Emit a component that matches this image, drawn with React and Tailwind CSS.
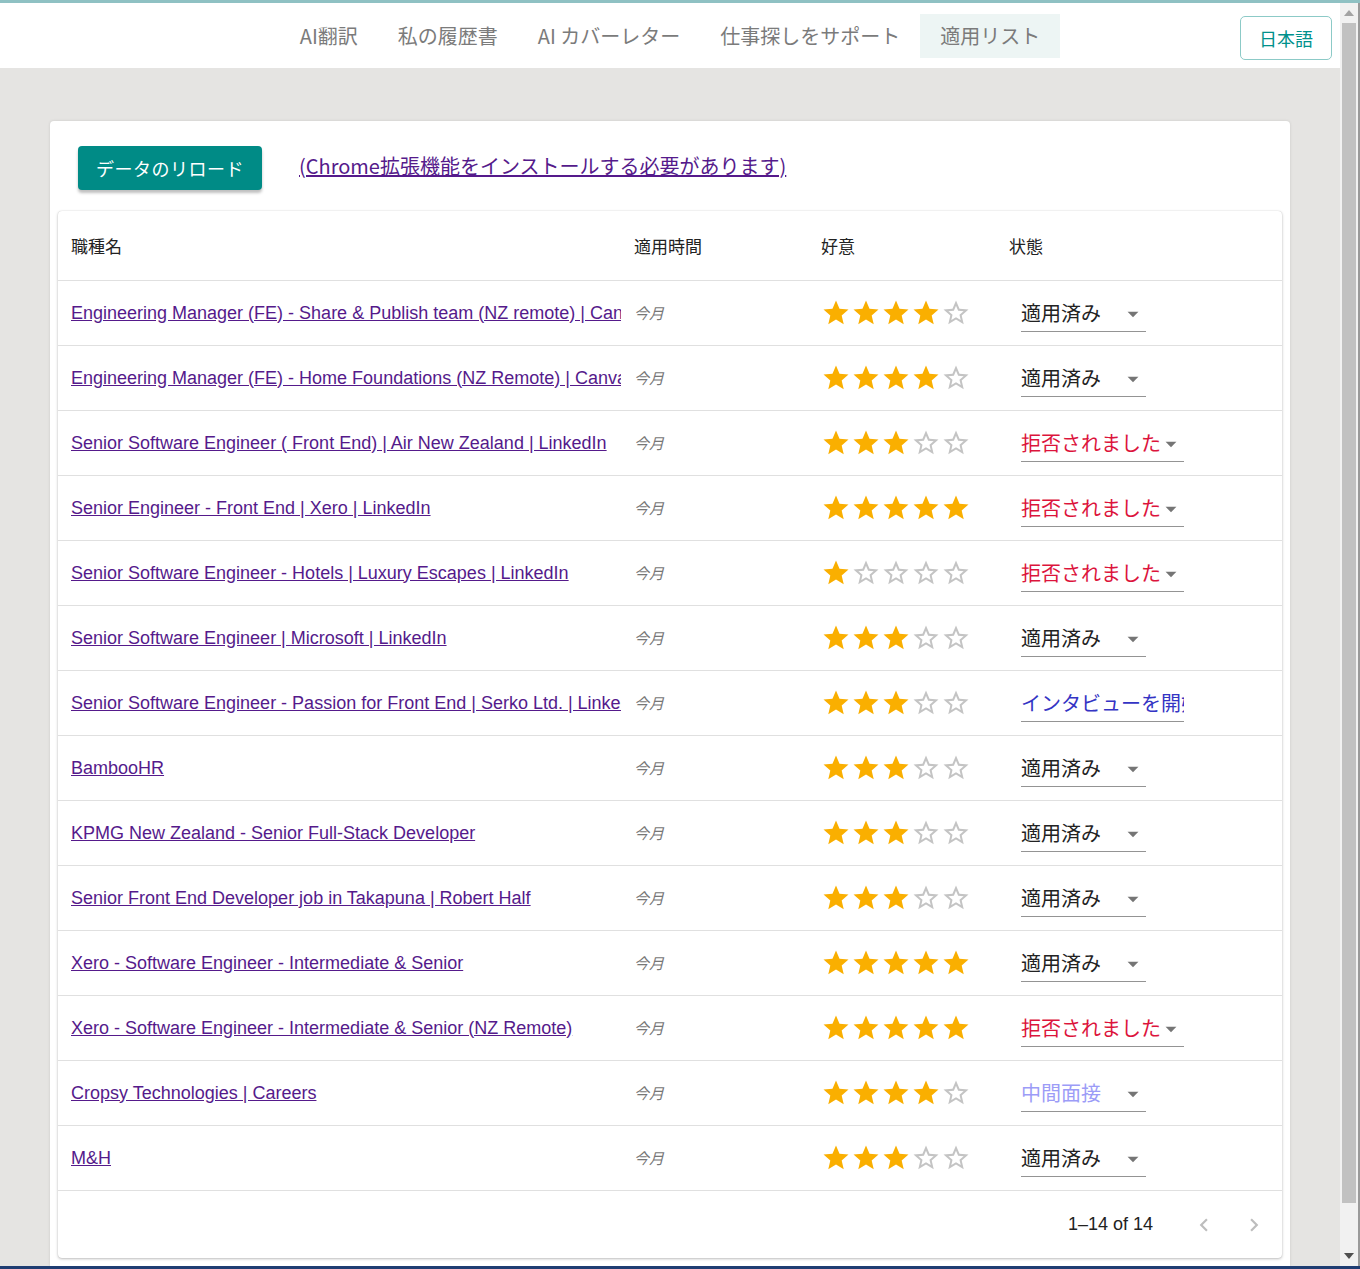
import React from 'react';

const jp = '"Noto Sans CJK JP", sans-serif';
const latin = '"Liberation Sans", "Noto Sans CJK JP", sans-serif';

const jobs = [
  { title: 'Engineering Manager (FE) - Share & Publish team (NZ remote) | Canva', rating: 4, status: 'applied' },
  { title: 'Engineering Manager (FE) - Home Foundations (NZ Remote) | Canva', rating: 4, status: 'applied' },
  { title: 'Senior Software Engineer ( Front End) | Air New Zealand | LinkedIn', rating: 3, status: 'rejected' },
  { title: 'Senior Engineer - Front End | Xero | LinkedIn', rating: 5, status: 'rejected' },
  { title: 'Senior Software Engineer - Hotels | Luxury Escapes | LinkedIn', rating: 1, status: 'rejected' },
  { title: 'Senior Software Engineer | Microsoft | LinkedIn', rating: 3, status: 'applied' },
  { title: 'Senior Software Engineer - Passion for Front End | Serko Ltd. | LinkedIn', rating: 3, status: 'interview' },
  { title: 'BambooHR', rating: 3, status: 'applied' },
  { title: 'KPMG New Zealand - Senior Full-Stack Developer', rating: 3, status: 'applied' },
  { title: 'Senior Front End Developer job in Takapuna | Robert Half', rating: 3, status: 'applied' },
  { title: 'Xero - Software Engineer - Intermediate & Senior', rating: 5, status: 'applied' },
  { title: 'Xero - Software Engineer - Intermediate & Senior (NZ Remote)', rating: 5, status: 'rejected' },
  { title: 'Cropsy Technologies | Careers', rating: 4, status: 'midterm' },
  { title: 'M&H', rating: 3, status: 'applied' },
];

const statusStyle = {
  applied: { label: '適用済み', cls: 'text-[#222222]' },
  rejected: { label: '拒否されました', cls: 'text-[#dc143c]' },
  interview: { label: 'インタビューを開始', cls: 'text-[#3434c4]' },
  midterm: { label: '中間面接', cls: 'text-[#9c9cf7]' },
};

function Star({ filled }) {
  return (
    <svg width="30" height="30" viewBox="0 0 24 24" className={filled ? 'fill-[#faaf00]' : 'fill-[#c4c4c4]'}>
      {filled ? (
        <path d="M12 17.27L18.18 21l-1.64-7.03L22 9.24l-7.19-.61L12 2 9.19 8.63 2 9.24l5.46 4.73L5.82 21z" />
      ) : (
        <path d="M22 9.24l-7.19-.62L12 2 9.19 8.63 2 9.24l5.46 4.73L5.82 21 12 17.27 18.18 21l-1.63-7.03L22 9.24zM12 15.4l-3.76 2.27 1-4.28-3.32-2.88 4.38-.38L12 6.1l1.71 4.04 4.38.38-3.32 2.88 1 4.28L12 15.4z" />
      )}
    </svg>
  );
}

function StatusSelect({ status }) {
  const s = statusStyle[status];
  const long = status === 'interview';
  return (
    <div
      className={`relative ml-3 inline-flex h-[37px] min-w-[125px] max-w-[163px] items-center overflow-hidden border-b border-[#949494] ${long ? '' : 'pr-6'}`}
    >
      <span className={`overflow-hidden whitespace-nowrap text-[20px] ${s.cls}`} style={{ fontFamily: jp }}>
        {s.label}
      </span>
      {!long && (
        <svg width="26" height="26" viewBox="0 0 24 24" className="absolute right-0 top-[6px] fill-[#757575]">
          <path d="M7 10l5 5 5-5z" />
        </svg>
      )}
    </div>
  );
}

function Row({ job }) {
  return (
    <div className="grid h-[65px] grid-cols-[563px_187px_188px_1fr] items-center border-b border-[#e0e0e0]">
      <div className="overflow-hidden whitespace-nowrap pl-[13px]">
        <a href="#" className="text-[18px] text-[#551a8b] underline" style={{ fontFamily: latin }}>
          {job.title}
        </a>
      </div>
      <div className="pl-[13px] text-[15px] italic text-[#777777]" style={{ fontFamily: jp }}>
        今月
      </div>
      <div className="flex pl-[13px]">
        {[1, 2, 3, 4, 5].map((n) => (
          <Star key={n} filled={n <= job.rating} />
        ))}
      </div>
      <div className="pl-[13px]">
        <StatusSelect status={job.status} />
      </div>
    </div>
  );
}

export default function App() {
  const tabs = ['AI翻訳', '私の履歴書', 'AI カバーレター', '仕事探しをサポート', '適用リスト'];
  return (
    <div className="flex h-[1269px] flex-col overflow-hidden bg-[#e5e4e2]">
      <div className="h-[3px] bg-[#8fc1c3]" />
      <div className="flex min-h-0 flex-1">
        <div className="flex w-[1340px] flex-col">
          <nav className="relative flex h-[65px] items-center justify-center bg-white" style={{ fontFamily: jp }}>
            {tabs.map((t, i) => (
              <div
                key={t}
                className={`flex h-[44px] items-center px-5 text-[20px] text-[#7b7b7b] ${i === 4 ? 'bg-[#edf5f4]' : ''}`}
              >
                {t}
              </div>
            ))}
            <button className="absolute right-2 top-[13px] h-[44px] rounded-[5px] border border-[#8ccac7] px-[18px] text-[18px] text-[#00918c]">
              日本語
            </button>
          </nav>
          <main className="flex-1 px-[50px] pt-[53px]">
            <div className="flex h-full flex-col rounded-t-[4px] bg-white px-2 shadow-[0_0_3px_rgba(0,0,0,0.12)]">
              <div className="flex items-center pl-5 pt-[25px] pb-[21px]">
                <button
                  className="h-[44px] w-[184px] rounded-[4px] bg-[#008b86] text-[18px] tracking-[0.5px] text-white shadow-[0_3px_3px_rgba(0,0,0,0.25)]"
                  style={{ fontFamily: jp }}
                >
                  データのリロード
                </button>
                <a
                  href="#"
                  className="ml-[37px] -mt-[4px] text-[20px] text-[#551a8b] underline"
                  style={{ fontFamily: jp }}
                >
                  (Chrome拡張機能をインストールする必要があります)
                </a>
              </div>
              <div className="rounded-[4px] bg-white shadow-[0_1px_3px_rgba(0,0,0,0.25),0_0_1px_rgba(0,0,0,0.2)]">
                <div
                  className="grid h-[70px] grid-cols-[563px_187px_188px_1fr] items-center border-b border-[#e0e0e0] text-[17px] text-[#222222]"
                  style={{ fontFamily: jp }}
                >
                  <div className="pl-[13px]">職種名</div>
                  <div className="pl-[13px]">適用時間</div>
                  <div className="pl-[13px]">好意</div>
                  <div className="pl-[13px]">状態</div>
                </div>
                {jobs.map((job, i) => (
                  <Row key={i} job={job} />
                ))}
                <div className="flex h-[67px] items-center justify-end pr-1" style={{ fontFamily: latin }}>
                  <span className="text-[18px] text-[#222222]">1–14 of 14</span>
                  <div className="ml-[27px] flex h-12 w-12 items-center justify-center">
                    <svg width="26" height="26" viewBox="0 0 24 24" className="fill-[#bdbdbd]">
                      <path d="M15.41 16.59L10.83 12l4.58-4.59L14 6l-6 6 6 6 1.41-1.41z" />
                    </svg>
                  </div>
                  <div className="ml-[2px] flex h-12 w-12 items-center justify-center">
                    <svg width="26" height="26" viewBox="0 0 24 24" className="fill-[#bdbdbd]">
                      <path d="M8.59 16.59L13.17 12 8.59 7.41 10 6l6 6-6 6-1.41-1.41z" />
                    </svg>
                  </div>
                </div>
              </div>
              <div className="h-2" />
            </div>
          </main>
        </div>
        <div className="flex w-[20px] flex-col border-r-2 border-[#9a9a9a] bg-[#f1f1f1]">
          <div className="flex h-[20px] items-center justify-center">
            <svg width="10" height="6" viewBox="0 0 10 6" className="fill-[#a3a3a3]">
              <path d="M0 6L5 0l5 6z" />
            </svg>
          </div>
          <div className="mx-[2px] h-[1180px] bg-[#c1c1c1]" />
          <div className="flex-1" />
          <div className="flex h-[20px] items-center justify-center">
            <svg width="10" height="6" viewBox="0 0 10 6" className="fill-[#505050]">
              <path d="M0 0h10L5 6z" />
            </svg>
          </div>
        </div>
      </div>
      <div className="h-[3px] bg-[#1f3d72]" />
    </div>
  );
}
